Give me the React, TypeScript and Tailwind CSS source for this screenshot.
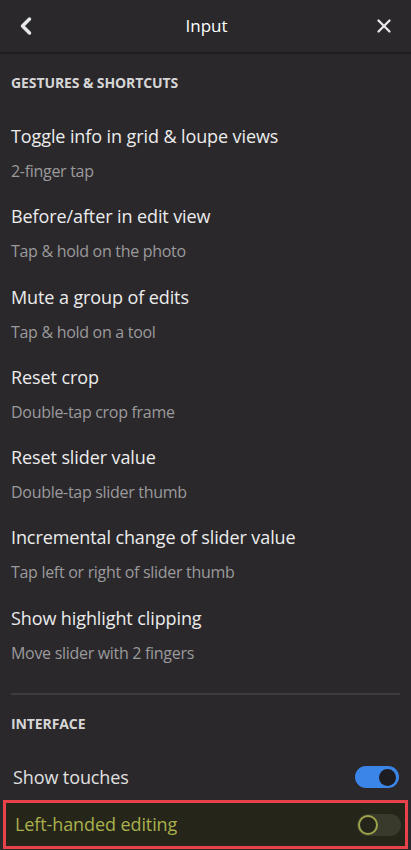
import { ChevronLeft, X } from "lucide-react";

const shortcuts = [
  { title: "Toggle info in grid & loupe views", hint: "2-finger tap" },
  { title: "Before/after in edit view", hint: "Tap & hold on the photo" },
  { title: "Mute a group of edits", hint: "Tap & hold on a tool" },
  { title: "Reset crop", hint: "Double-tap crop frame" },
  { title: "Reset slider value", hint: "Double-tap slider thumb" },
  { title: "Incremental change of slider value", hint: "Tap left or right of slider thumb" },
  { title: "Show highlight clipping", hint: "Move slider with 2 fingers" },
];

export default function App() {
  return (
    <div className="w-[411px] h-[850px] overflow-hidden bg-[#2a282b] text-[#e8e8e8] font-['Open_Sans',sans-serif]">
      {/* header */}
      <div className="h-[54px] flex items-center justify-between px-[14px] border-b-2 border-[#1f1e20]">
        <ChevronLeft size={28} strokeWidth={3} className="text-[#e8e8e8] -ml-[2px]" />
        <div className="text-[17px] font-medium text-white">Input</div>
        <X size={22} strokeWidth={2.5} className="text-[#e8e8e8] mr-[2px]" />
      </div>

      <div className="px-[11px]">
        <div className="pt-[21px] text-[14px] leading-[16px] font-bold tracking-[-0.1px] text-[#d6d6d6]">
          GESTURES &amp; SHORTCUTS
        </div>

        <div className="pt-[33px]">
          {shortcuts.map((s) => (
            <div key={s.title} className="pb-[23.3px]">
              <div className="text-[18px] leading-[24px] text-[#ececec] tracking-[-0.1px]">{s.title}</div>
              <div className="mt-[13px] text-[16px] leading-[20px] text-[#9b9a9c] tracking-[-0.3px]">{s.hint}</div>
            </div>
          ))}
        </div>

        <div className="mt-[7px] h-[2px] bg-[#3c3b3e]" />

        <div className="pt-[21px] text-[14px] leading-[16px] font-bold tracking-[-0.1px] text-[#d6d6d6]">
          INTERFACE
        </div>
      </div>

      <div className="mt-[29px] h-[32px] flex items-center justify-between pl-[13px] pr-[12px]">
        <div className="text-[18px] text-[#e0e0e0] tracking-[-0.1px]">Show touches</div>
        <div className="w-[44px] h-[22px] rounded-full bg-[#3b84e8] flex items-center justify-end pr-[3px]">
          <div className="w-[17px] h-[17px] rounded-full bg-[#1d1c20]" />
        </div>
      </div>

      <div className="mt-[7px] mx-[3px] h-[49px] border-[3.5px] border-[#e8434a] bg-[#26251a] flex items-center justify-between pl-[9px] pr-[4px]">
        <div className="text-[18px] text-[#a9b04c] tracking-[-0.1px]">Left-handed editing</div>
        <div className="w-[44px] h-[22px] rounded-full bg-[#3a3a2c] flex items-center pl-[1px]">
          <div className="w-[20px] h-[20px] rounded-full border-[2.5px] border-[#9ea44a] bg-[#25241a]" />
        </div>
      </div>
    </div>
  );
}
